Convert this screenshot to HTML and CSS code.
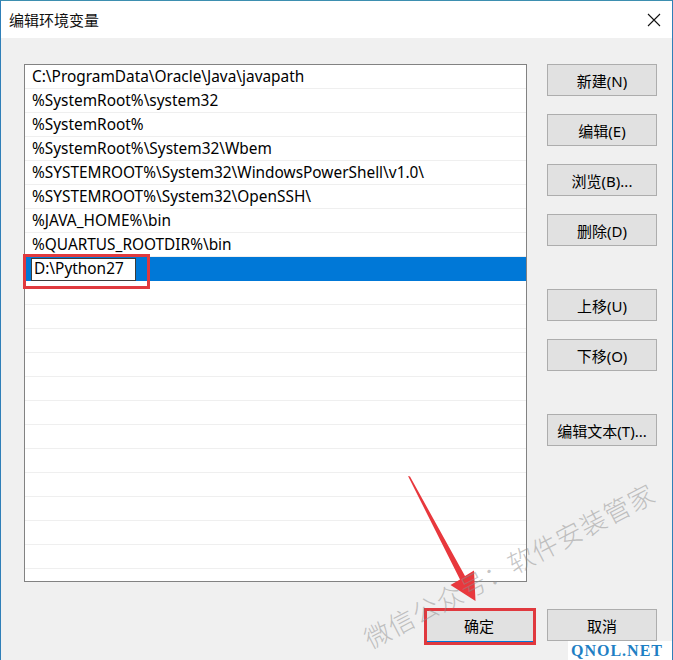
FILE: index.html
```html
<!DOCTYPE html>
<html lang="zh-CN">
<head>
<meta charset="utf-8">
<title>编辑环境变量</title>
<link rel="stylesheet" href="styles.css">
</head>
<body>
<div class="window">
  <div class="titlebar">
    <span class="title">编辑环境变量</span>
    <svg class="close" width="14" height="14" viewBox="0 0 14 14"><path d="M1 1 L13 13 M13 1 L1 13" stroke="#111" stroke-width="1.1" fill="none"/></svg>
  </div>
  <div class="body">
    <div class="main">
      <div class="list">
        <div class="row">C:\ProgramData\Oracle\Java\javapath</div>
        <div class="row">%SystemRoot%\system32</div>
        <div class="row">%SystemRoot%</div>
        <div class="row">%SystemRoot%\System32\Wbem</div>
        <div class="row">%SYSTEMROOT%\System32\WindowsPowerShell\v1.0\</div>
        <div class="row">%SYSTEMROOT%\System32\OpenSSH\</div>
        <div class="row">%JAVA_HOME%\bin</div>
        <div class="row">%QUARTUS_ROOTDIR%\bin</div>
        <div class="row selected"><span class="editbox">D:\Python27</span></div>
        <div class="row"></div><div class="row"></div><div class="row"></div>
        <div class="row"></div><div class="row"></div><div class="row"></div>
        <div class="row"></div><div class="row"></div><div class="row"></div>
        <div class="row"></div><div class="row"></div><div class="row"></div>
        <div class="row"></div>
      </div>
      <div class="side">
        <div class="group">
          <button class="btn">新建(N)</button>
          <button class="btn">编辑(E)</button>
          <button class="btn">浏览(B)...</button>
          <button class="btn">删除(D)</button>
        </div>
        <div class="group">
          <button class="btn">上移(U)</button>
          <button class="btn">下移(O)</button>
        </div>
        <div class="group">
          <button class="btn">编辑文本(T)...</button>
        </div>
      </div>
    </div>
    <div class="footer">
      <button class="btn default">确定</button>
      <button class="btn">取消</button>
    </div>
  </div>

  <div class="mark mark-edit"></div>
  <div class="mark mark-ok"></div>
  <svg class="arrow" width="673" height="660" viewBox="0 0 673 660">
    <polygon points="408,476 410,476.5 465,576 474,570.5 475.5,601 450.5,585 460,579.5" fill="#e8383d"/>
  </svg>
  <div class="watermark">微信公众号：软件安装管家</div>
  <div class="logo">QNOL.NET</div>
</div>
</body>
</html>
```
FILE: styles.css
```css
* { box-sizing: border-box; }
html, body { margin: 0; padding: 0; }
body {
  width: 673px;
  height: 660px;
  overflow: hidden;
  font-family: "Noto Sans", "Noto Sans CJK SC", sans-serif;
  color: #000;
}
.window {
  position: relative;
  width: 673px;
  height: 660px;
  background: #f0f0f0;
  border-top: 1px solid #3d8fb0;
  border-left: 1px solid #2f7fb8;
  border-right: 1px solid #2f7fb8;
  overflow: hidden;
}
.titlebar {
  height: 37px;
  background: #fff;
  display: flex;
  align-items: center;
  justify-content: space-between;
  padding: 0 11px 0 8px;
}
.title {
  font-family: "Noto Sans CJK SC", sans-serif;
  font-size: 15px;
  color: #111;
  margin-top: -1px;
}
.body {
  padding: 26px 0 0 23px;
}
.main {
  display: flex;
  gap: 20px;
}
.list {
  width: 503px;
  height: 518px;
  background: #fff;
  border: 1px solid #828282;
  overflow: hidden;
}
.row {
  height: 24px;
  border-bottom: 1px solid #efefef;
  padding-left: 7px;
  font-size: 15.4px;
  line-height: 24px;
  white-space: nowrap;
}
.row.selected {
  background: #0078d7;
  border-bottom-color: #0078d7;
  padding-left: 6px;
  padding-top: 1px;
}
.editbox {
  display: block;
  width: 105px;
  height: 23px;
  background: #fff;
  border: 1px solid #3c3c3c;
  padding-left: 2px;
  line-height: 20px;
  font-size: 15.4px;
}
.side {
  display: flex;
  flex-direction: column;
  gap: 43px;
}
.group {
  display: flex;
  flex-direction: column;
  gap: 18px;
}
.btn {
  width: 110px;
  height: 32px;
  background: #e1e1e1;
  border: 1px solid #adadad;
  font-family: "Noto Sans", "Noto Sans CJK SC", sans-serif;
  font-size: 15px;
  color: #000;
  padding: 0;
}
.footer {
  display: flex;
  gap: 13px;
  margin-top: 27px;
  padding-left: 400px;
}
.btn.default {
  border-color: #0078d7;
  height: 33px;
}
.mark {
  position: absolute;
  border: 3px solid #e0393e;
}
.mark-edit {
  left: 22px;
  top: 253px;
  width: 127px;
  height: 35px;
}
.mark-ok {
  left: 423px;
  top: 607px;
  width: 112px;
  height: 37px;
}
.arrow {
  position: absolute;
  left: -1px;
  top: -1px;
}
.watermark {
  position: absolute;
  left: 508px;
  top: 564px;
  transform: translate(-50%, -50%) rotate(-27.5deg);
  font-family: "Noto Sans CJK SC", serif;
  font-weight: 300;
  font-size: 26px;
  line-height: 30px;
  letter-spacing: 1px;
  color: rgba(140, 140, 140, 0.5);
  white-space: nowrap;
}
.logo {
  position: absolute;
  right: 0;
  bottom: 0;
  width: 104px;
  height: 19px;
  background: #fff;
  font-family: "Liberation Serif", serif;
  font-weight: bold;
  font-size: 16px;
  line-height: 19px;
  letter-spacing: 1px;
  color: #1f7fc4;
  padding-left: 3px;
  white-space: nowrap;
}
```
